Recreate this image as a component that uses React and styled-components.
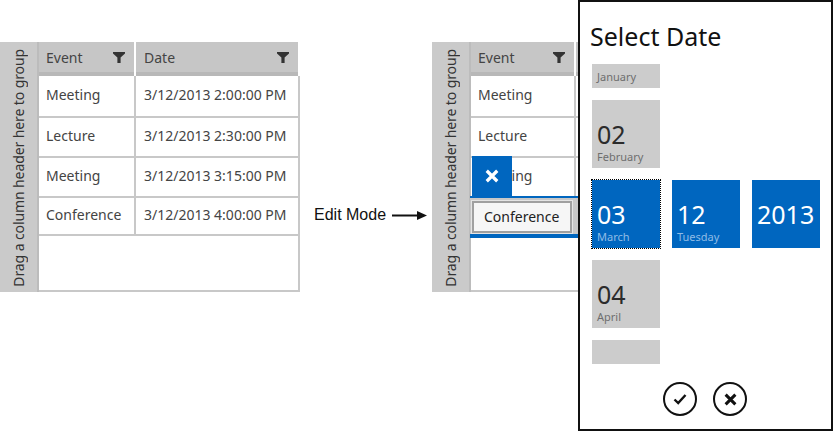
import React from 'react'
import styled, { createGlobalStyle } from 'styled-components'

const GlobalStyle = createGlobalStyle`
html, body {
  margin: 0;
  padding: 0;
  background: #fff;
}
* { box-sizing: border-box; }
`

const uiFont = `"Noto Sans", "Open Sans", sans-serif`

const Page = styled.div`
  width: 833px;
  height: 431px;
  display: flex;
  overflow: hidden;
  font-family: ${uiFont};
`
const Stage = styled.div`
  width: 578px;
  padding-top: 42px;
  display: flex;
  align-items: flex-start;
`
const GridFrame = styled.div`
  width: ${p => p.$width}px;
  height: 250px;
  display: flex;
  overflow: hidden;
  flex-shrink: 0;
`
const GroupPanel = styled.div`
  width: 39px;
  flex-shrink: 0;
  background: #cacaca;
  border-right: 2px solid #bcbcbc;
  display: flex;
  align-items: center;
  justify-content: center;
`
const GroupText = styled.span`
  writing-mode: vertical-rl;
  transform: rotate(180deg);
  font-size: 14px;
  white-space: nowrap;
  color: #333;
  letter-spacing: -0.1px;
  margin-top: 2px;
`
const GridBody = styled.div`
  flex: 1;
  min-width: 0;
  display: flex;
  flex-direction: column;
`
const HeaderRow = styled.div`
  display: flex;
  height: 34px;
  flex-shrink: 0;
`
const HeaderCell = styled.div`
  width: ${p => p.$width}px;
  flex-shrink: 0;
  background: #c6c6c6;
  border-bottom: 4px solid #b8b8b8;
  margin-right: 2px;
  padding: 0 9px 0 ${p => p.$pad}px;
  display: flex;
  align-items: center;
  justify-content: space-between;
  font-size: 14px;
  color: #444;
`
const Row = styled.div`
  position: relative;
  display: flex;
  height: ${p => p.$height}px;
  flex-shrink: 0;
  border-bottom: 2px solid #c8c8c8;
`
const Cell = styled.div`
  width: ${p => p.$width}px;
  flex-shrink: 0;
  border-right: 2px solid #c8c8c8;
  padding: 0 0 4px ${p => p.$pad}px;
  display: flex;
  align-items: center;
  font-size: 14px;
  color: #444;
  white-space: nowrap;
`
const Filler = styled.div`
  flex: 1;
  border-bottom: 2px solid #c8c8c8;
  border-right: ${p => (p.$clipped ? '0' : '2px solid #c8c8c8')};
`
const DeleteTile = styled.div`
  position: absolute;
  left: 1px;
  top: -2px;
  width: 40px;
  height: 40px;
  background: #0066bf;
  display: flex;
  align-items: center;
  justify-content: center;
`
const EditOverlay = styled.div`
  position: absolute;
  left: -1px;
  right: 0;
  top: -2px;
  height: 42px;
  border-top: 2px solid #0066bf;
  border-bottom: 4px solid #0066bf;
  background: #c8c8c8;
  padding: 3px 0 0 2px;
`
const EditInput = styled.div`
  width: 100px;
  height: 32px;
  background: #f6f6f6;
  border: 2px solid #a0a0a0;
  outline: 1px solid #e4e4e4;
  padding: 0 0 2px 10px;
  display: flex;
  align-items: center;
  font-size: 14px;
  color: #222;
`
const EditLabel = styled.div`
  width: 132px;
  flex-shrink: 0;
  margin-top: 163px;
  padding-left: 14px;
  display: flex;
  align-items: center;
  gap: 6px;
  font-family: "Liberation Sans", Arial, sans-serif;
  font-size: 16px;
  line-height: 20px;
  color: #111;
`
const Dialog = styled.div`
  width: 255px;
  height: 431px;
  flex-shrink: 0;
  border: 2px solid #111;
  padding-left: 12px;
  display: flex;
  flex-direction: column;
  background: #fff;
`
const Title = styled.h1`
  margin: 0 0 0 -2px;
  height: 62px;
  padding-top: 16px;
  font-size: 25px;
  line-height: 36px;
  font-weight: 400;
  color: #111;
`
const TileGrid = styled.div`
  display: grid;
  grid-template-columns: repeat(3, 68px);
  grid-template-rows: 24px 68px 68px 68px 24px;
  gap: 12px;
`
const Tile = styled.div`
  grid-column: ${p => p.$col};
  grid-row: ${p => p.$row};
  background: ${p => (p.$active ? '#0066bf' : '#cccccc')};
  color: ${p => (p.$active ? '#fff' : '#2b2b2b')};
  outline: ${p => (p.$focused ? '1px dotted #000' : 'none')};
  padding: ${p => (p.$top ? '0 5px' : '0 5px 4px')};
  display: flex;
  flex-direction: column;
  justify-content: ${p => (p.$top ? 'center' : 'flex-end')};
`
const TileNumber = styled.div`
  font-size: 25px;
  line-height: 30px;
`
const TileLabel = styled.div`
  font-size: 11px;
  line-height: 15px;
  color: ${p => (p.$active ? '#8fbce6' : '#6e6e6e')};
`
const Actions = styled.div`
  margin-top: 18px;
  padding-left: 71px;
  display: flex;
  gap: 16px;
`
const RoundButton = styled.button`
  width: 34px;
  height: 34px;
  padding: 0;
  border: 2px solid #111;
  border-radius: 50%;
  background: #fff;
  display: flex;
  align-items: center;
  justify-content: center;
`

const FilterIcon = () => (
  <svg width="12" height="11" viewBox="0 0 12 11">
    <path d="M0 0H12V1.5L7.6 5.5V11H4.4V5.5L0 1.5Z" fill="#333" />
  </svg>
)
const CrossIcon = ({ color, size }) => (
  <svg width={size} height={size} viewBox="0 0 12 12">
    <path d="M1.5 1.5L10.5 10.5M10.5 1.5L1.5 10.5" stroke={color} strokeWidth="2.8" fill="none" />
  </svg>
)
const CheckIcon = () => (
  <svg width="14" height="12" viewBox="0 0 14 12">
    <path d="M1.5 6.5L5.2 10L12.5 2" stroke="#111" strokeWidth="2.4" fill="none" />
  </svg>
)
const ArrowIcon = () => (
  <svg width="35" height="9" viewBox="0 0 35 9">
    <path d="M0 4.5H27" stroke="#111" strokeWidth="2" />
    <path d="M25 0L35 4.5L25 9Z" fill="#111" />
  </svg>
)

const rows = [
  { event: 'Meeting', date: '3/12/2013 2:00:00 PM', height: 42 },
  { event: 'Lecture', date: '3/12/2013 2:30:00 PM', height: 40 },
  { event: 'Meeting', date: '3/12/2013 3:15:00 PM', height: 40 },
  { event: 'Conference', date: '3/12/2013 4:00:00 PM', height: 38 },
]

// editing: the second grid, cut off by the dialog, with its last row in edit mode
function DataGrid({ width, eventWidth, editing }) {
  return (
    <GridFrame $width={width}>
      <GroupPanel>
        <GroupText>Drag a column header here to group</GroupText>
      </GroupPanel>
      <GridBody>
        <HeaderRow>
          <HeaderCell $width={eventWidth - 2} $pad={7}>
            Event <FilterIcon />
          </HeaderCell>
          <HeaderCell $width={162} $pad={8}>
            {!editing && 'Date'} {!editing && <FilterIcon />}
          </HeaderCell>
        </HeaderRow>
        {rows.map((row, i) => (
          <Row key={i} $height={row.height}>
            <Cell $width={eventWidth} $pad={7}>
              {!(editing && i === 3) && row.event}
            </Cell>
            <Cell $width={164} $pad={8}>{!editing && row.date}</Cell>
            {editing && i === 2 && (
              <DeleteTile>
                <CrossIcon color="#fff" size={14} />
              </DeleteTile>
            )}
            {editing && i === 3 && (
              <EditOverlay>
                <EditInput>Conference</EditInput>
              </EditOverlay>
            )}
          </Row>
        ))}
        <Filler $clipped={editing} />
      </GridBody>
    </GridFrame>
  )
}

export default function App() {
  return (
    <>
      <GlobalStyle />
      <Page>
        <Stage>
          <DataGrid width={300} eventWidth={97} />
          <EditLabel>
            Edit Mode <ArrowIcon />
          </EditLabel>
          <DataGrid width={146} eventWidth={105} editing />
        </Stage>
        <Dialog>
          <Title>Select Date</Title>
          <TileGrid>
            <Tile $col={1} $row={1} $top>
              <TileLabel>January</TileLabel>
            </Tile>
            <Tile $col={1} $row={2}>
              <TileNumber>02</TileNumber>
              <TileLabel>February</TileLabel>
            </Tile>
            <Tile $col={1} $row={3} $active $focused>
              <TileNumber>03</TileNumber>
              <TileLabel $active>March</TileLabel>
            </Tile>
            <Tile $col={2} $row={3} $active>
              <TileNumber>12</TileNumber>
              <TileLabel $active>Tuesday</TileLabel>
            </Tile>
            <Tile $col={3} $row={3} $active>
              <TileNumber>2013</TileNumber>
              <TileLabel>&nbsp;</TileLabel>
            </Tile>
            <Tile $col={1} $row={4}>
              <TileNumber>04</TileNumber>
              <TileLabel>April</TileLabel>
            </Tile>
            <Tile $col={1} $row={5} />
          </TileGrid>
          <Actions>
            <RoundButton>
              <CheckIcon />
            </RoundButton>
            <RoundButton>
              <CrossIcon color="#111" size={13} />
            </RoundButton>
          </Actions>
        </Dialog>
      </Page>
    </>
  )
}
